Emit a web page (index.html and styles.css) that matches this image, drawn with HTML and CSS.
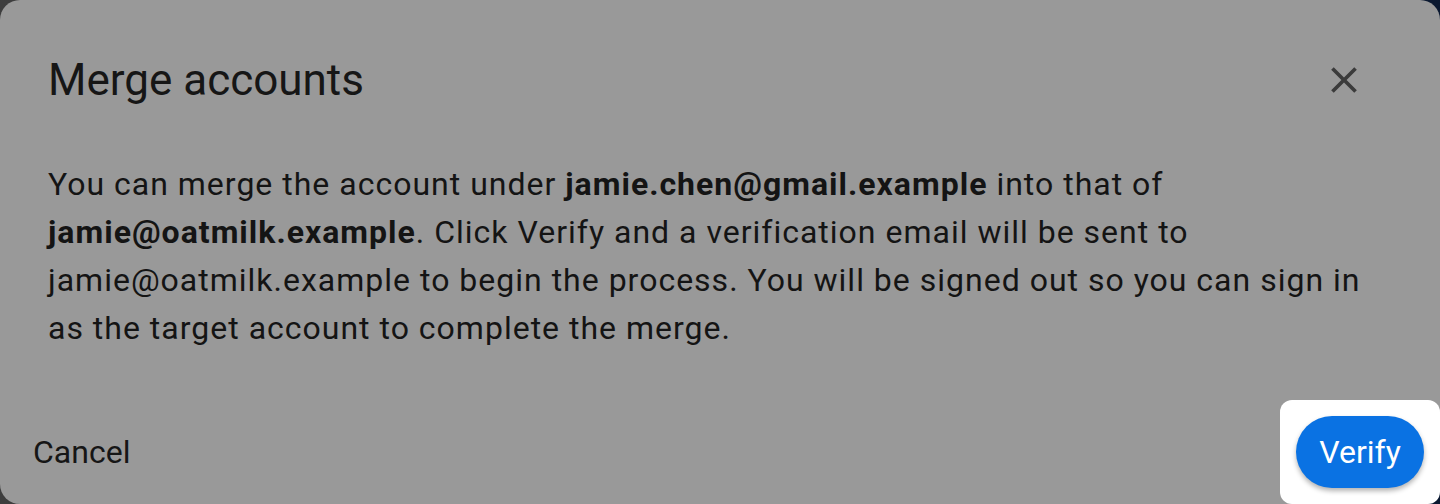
FILE: index.html
```html
<!DOCTYPE html>
<html lang="en">
<head>
    <meta charset="UTF-8">
    <meta name="viewport" content="width=device-width, initial-scale=1.0">
    <title>Merge accounts</title>
    <link rel="stylesheet" href="styles.css">
</head>
<body>
    <div class="dialog">
        <div class="dialog-header">
            <h2>Merge accounts</h2>
            <button class="close-btn" aria-label="Close">
                <svg viewBox="0 0 24 24" width="44" height="44">
                    <path d="M19 6.41L17.59 5 12 10.59 6.41 5 5 6.41 10.59 12 5 17.59 6.41 19 12 13.41 17.59 19 19 17.59 13.41 12z" fill="currentColor"/>
                </svg>
            </button>
        </div>
        <p class="dialog-body">
            You can merge the account under <strong>jamie.chen@gmail.example</strong> into that of
            <strong>jamie@oatmilk.example</strong>. Click Verify and a verification email will be sent to
            jamie@oatmilk.example to begin the process. You will be signed out so you can sign in
            as the target account to complete the merge.
        </p>
        <div class="dialog-actions">
            <button class="text-btn">Cancel</button>
            <div class="spotlight">
                <button class="primary-btn">Verify</button>
            </div>
        </div>
    </div>
</body>
</html>
```

FILE: styles.css
```css
html, body {
    margin: 0;
    height: 100%;
}
body {
    font-family: Roboto, "Liberation Sans", sans-serif;
    background: linear-gradient(90deg, #3e3e3e 0%, #1c2430 60%, #0a1830 100%);
    overflow: hidden;
}
.dialog {
    height: 504px;
    box-sizing: border-box;
    background-color: #999999;
    border-radius: 20px;
    display: flex;
    flex-direction: column;
}
.dialog-header {
    display: flex;
    justify-content: space-between;
    align-items: center;
    padding: 52px 74px 0 48px;
}
.dialog-header h2 {
    margin: 0;
    font-size: 44px;
    line-height: 56px;
    font-weight: 400;
    color: #161616;
}
.close-btn {
    width: 44px;
    height: 44px;
    padding: 0;
    border: none;
    background: none;
    color: #3b3b3b;
    display: flex;
}
.dialog-body {
    margin: 52px 48px 0 48px;
    font-size: 32px;
    line-height: 48px;
    letter-spacing: 1px;
    color: #141414;
}
.dialog-body strong {
    font-weight: 700;
}
.dialog-actions {
    margin-top: auto;
    display: flex;
    justify-content: space-between;
    align-items: flex-end;
    padding-left: 16px;
}
.text-btn {
    font-family: inherit;
    font-size: 32px;
    height: 72px;
    margin-bottom: 16px;
    padding: 0 17px;
    border: none;
    background: none;
    color: #161616;
}
.spotlight {
    background-color: #ffffff;
    border-radius: 12px;
    padding: 16px;
}
.primary-btn {
    font-family: inherit;
    font-size: 32px;
    width: 128px;
    height: 72px;
    border: none;
    border-radius: 36px;
    background-color: #0a72e3;
    color: #ffffff;
    box-shadow: 0 3px 5px rgba(0,0,0,0.3);
    display: block;
}
```
